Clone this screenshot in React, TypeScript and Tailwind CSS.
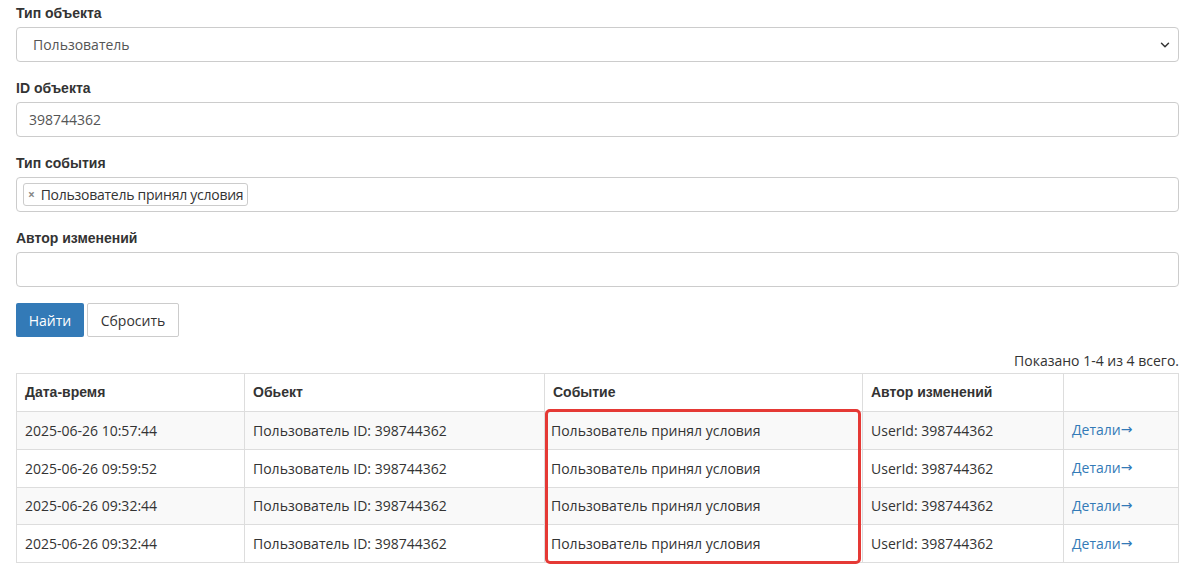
import { ChevronDown } from "lucide-react"

const rows = [
  "2025-06-26 10:57:44",
  "2025-06-26 09:59:52",
  "2025-06-26 09:32:44",
  "2025-06-26 09:32:44",
]

function Label({ children }: { children: React.ReactNode }) {
  return <label className="block text-[14px] font-bold text-[#333] mb-[5px] leading-[18px] font-['Liberation_Sans',sans-serif]">{children}</label>
}

export default function App() {
  return (
    <div className="w-[1199px] h-[573px] bg-white px-4 pt-[4px] text-[14px] text-[#333] font-['Open_Sans',sans-serif] overflow-hidden">
      <div className="w-[1163px]">
        {/* Filters */}
        <div className="mb-[17px]">
          <Label>Тип объекта</Label>
          <div className="flex h-[35px] items-center justify-between rounded border border-[#ccc] pl-[16px] pr-[6px] text-[#555]">
            <span>Пользователь</span>
            <ChevronDown className="h-[14px] w-[14px] text-[#333]" strokeWidth={2.5} />
          </div>
        </div>
        <div className="mb-[17px]">
          <Label>ID объекта</Label>
          <div className="flex h-[35px] items-center rounded border border-[#ccc] px-[12px] text-[#555]">398744362</div>
        </div>
        <div className="mb-[17px]">
          <Label>Тип события</Label>
          <div className="flex h-[35px] items-center rounded border border-[#ccc] px-[6px]">
            <span className="flex h-[23px] items-center gap-[6px] rounded-[3px] border border-[#ccc] pl-[4px] pr-[4px] text-[#333] tracking-[-0.25px]">
              <span className="text-[12px] font-bold text-[#888]">×</span>
              Пользователь принял условия
            </span>
          </div>
        </div>
        <div className="mb-[16px]">
          <Label>Автор изменений</Label>
          <div className="h-[35px] rounded border border-[#ccc]"></div>
        </div>
        <div className="flex gap-[3px]">
          <button className="h-[34px] w-[68px] rounded-[2px] bg-[#337ab7] text-white">Найти</button>
          <button className="h-[34px] w-[92px] rounded-[2px] border border-[#ccc] bg-white text-[#333]">Сбросить</button>
        </div>

        <div className="mt-[15px] mb-[3px] text-right leading-[18px]">Показано 1-4 из 4 всего.</div>

        {/* Table */}
        <div className="relative">
          <table className="w-full border-collapse border border-[#ddd]">
            <thead>
              <tr className="h-[38px] text-left font-['Liberation_Sans',sans-serif]">
                <th className="w-[228px] border border-[#ddd] px-[8px] font-bold">Дата-время</th>
                <th className="w-[300px] border border-[#ddd] px-[8px] font-bold">Обьект</th>
                <th className="w-[318px] border border-[#ddd] px-[8px] font-bold">Событие</th>
                <th className="w-[201px] border border-[#ddd] px-[8px] font-bold">Автор изменений</th>
                <th className="border border-[#ddd] px-[8px]"></th>
              </tr>
            </thead>
            <tbody>
              {rows.map((d, i) => (
                <tr key={i} className={"h-[37.75px] " + (i % 2 === 0 ? "bg-[#f9f9f9]" : "bg-white")}>
                  <td className="border border-[#ddd] px-[8px]">{d}</td>
                  <td className="border border-[#ddd] px-[8px]">Пользователь ID: 398744362</td>
                  <td className="border border-[#ddd] px-[6px]">Пользователь принял условия</td>
                  <td className="border border-[#ddd] px-[8px]">UserId: 398744362</td>
                  <td className="border border-[#ddd] px-[8px]">
                    <a href="#" className="text-[#337ab7]">
                      Детали<span className="relative -top-[1px] font-['DejaVu_Sans',sans-serif] text-[14px]">→</span>
                    </a>
                  </td>
                </tr>
              ))}
            </tbody>
          </table>
          {/* highlight */}
          <div className="pointer-events-none absolute left-[529px] top-[36px] h-[155px] w-[316px] rounded-[5px] border-[3px] border-[#e53935]"></div>
        </div>
      </div>
    </div>
  )
}
